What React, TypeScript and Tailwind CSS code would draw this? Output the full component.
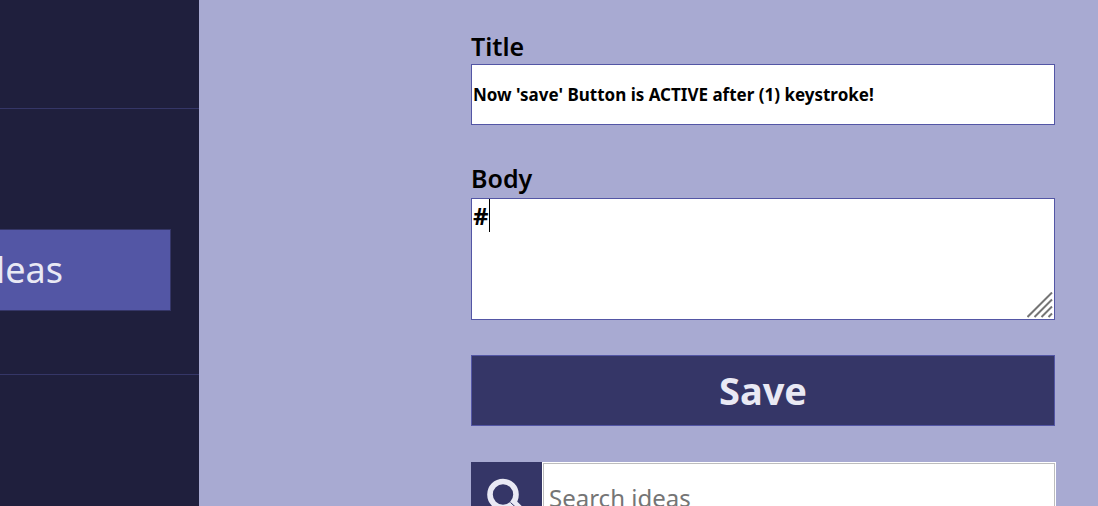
import { useState } from "react";

function Sidebar() {
  return (
    <aside className="flex w-[199px] shrink-0 flex-col overflow-hidden bg-[#1f1f3d]">
      <div className="h-[109px] shrink-0 border-b border-[#353667]" />
      <div className="flex h-[266px] shrink-0 items-end border-b border-[#353667] pr-7 pb-[63px]">
        <button
          type="button"
          className="flex h-[82px] w-full items-center justify-end border-y border-r border-[#353667] bg-[#5356a5] pr-[107px] text-[36px] text-[#e9e9f4]"
        >
          Ideas
        </button>
      </div>
    </aside>
  );
}

function ResizeGrip() {
  return (
    <svg
      className="pointer-events-none absolute right-[2px] bottom-[2px] h-[26px] w-[26px]"
      viewBox="0 0 26 26"
      fill="none"
      stroke="#757575"
      strokeWidth="2"
      aria-hidden="true"
    >
      <path d="M0.5 25 25 0.5M7.5 25 25 7.5M14.5 25 25 14.5M21.5 25 25 21.5" />
    </svg>
  );
}

function SearchIcon() {
  return (
    <svg className="h-10 w-10" viewBox="0 0 40 40" fill="none" stroke="#e9e9f4" aria-hidden="true">
      <path d="M26 26 36 36" strokeWidth="9.5" strokeLinecap="round" />
      <circle cx="16" cy="16.5" r="13" fill="#353667" strokeWidth="5.6" />
      <path d="M23.5 24.5 29 29.5" stroke="#353667" strokeWidth="1" />
    </svg>
  );
}

export default function App() {
  const [title, setTitle] = useState("Now 'save' Button is ACTIVE after (1) keystroke!");
  const [body, setBody] = useState("#");
  const [query, setQuery] = useState("");

  return (
    <div className="flex h-screen overflow-hidden bg-[#a8aad2] font-['Noto_Sans',sans-serif]">
      <Sidebar />
      <main className="min-w-0 flex-1 pt-[29px] pr-[43px] pl-[272px]">
        <form className="flex flex-col" onSubmit={(event) => event.preventDefault()}>
          <label htmlFor="title" className="mb-px text-[25px] leading-[34px] font-semibold text-black">
            Title
          </label>
          <input
            id="title"
            type="text"
            value={title}
            onChange={(event) => setTitle(event.target.value)}
            className="h-[61px] w-full border border-[#5356a5] bg-white px-px text-[17px] font-bold text-black outline-none"
          />
          <label htmlFor="body" className="mt-9 mb-[3px] text-[25px] leading-[34px] font-semibold text-black">
            Body
          </label>
          <div className="relative">
            <textarea
              id="body"
              value={body}
              onChange={(event) => setBody(event.target.value)}
              className="block h-[122px] w-full resize-none border border-[#5356a5] bg-white px-px text-[24px] leading-[34px] font-bold text-black outline-none"
            />
            <span className="absolute top-px left-[18px] h-[33px] w-px bg-black" aria-hidden="true" />
            <ResizeGrip />
          </div>
          <button
            type="submit"
            className="mt-[35px] h-[71px] w-full border border-[#5356a5] bg-[#353667] text-[38px] font-bold text-[#e9e9f4]"
          >
            Save
          </button>
        </form>
        <div className="-mr-px mt-9 flex h-[71px]">
          <button
            type="button"
            aria-label="Search"
            className="flex w-[71px] shrink-0 items-center justify-center bg-[#353667]"
          >
            <SearchIcon />
          </button>
          <div className="flex min-w-0 flex-1 bg-white p-px">
            <input
              type="search"
              aria-label="Search ideas"
              placeholder="Search ideas"
              value={query}
              onChange={(event) => setQuery(event.target.value)}
              className="min-w-0 flex-1 border border-[#bdbdbd] bg-white px-[5px] text-[24px] text-black outline-none placeholder:text-[#757575]"
            />
          </div>
        </div>
      </main>
    </div>
  );
}
